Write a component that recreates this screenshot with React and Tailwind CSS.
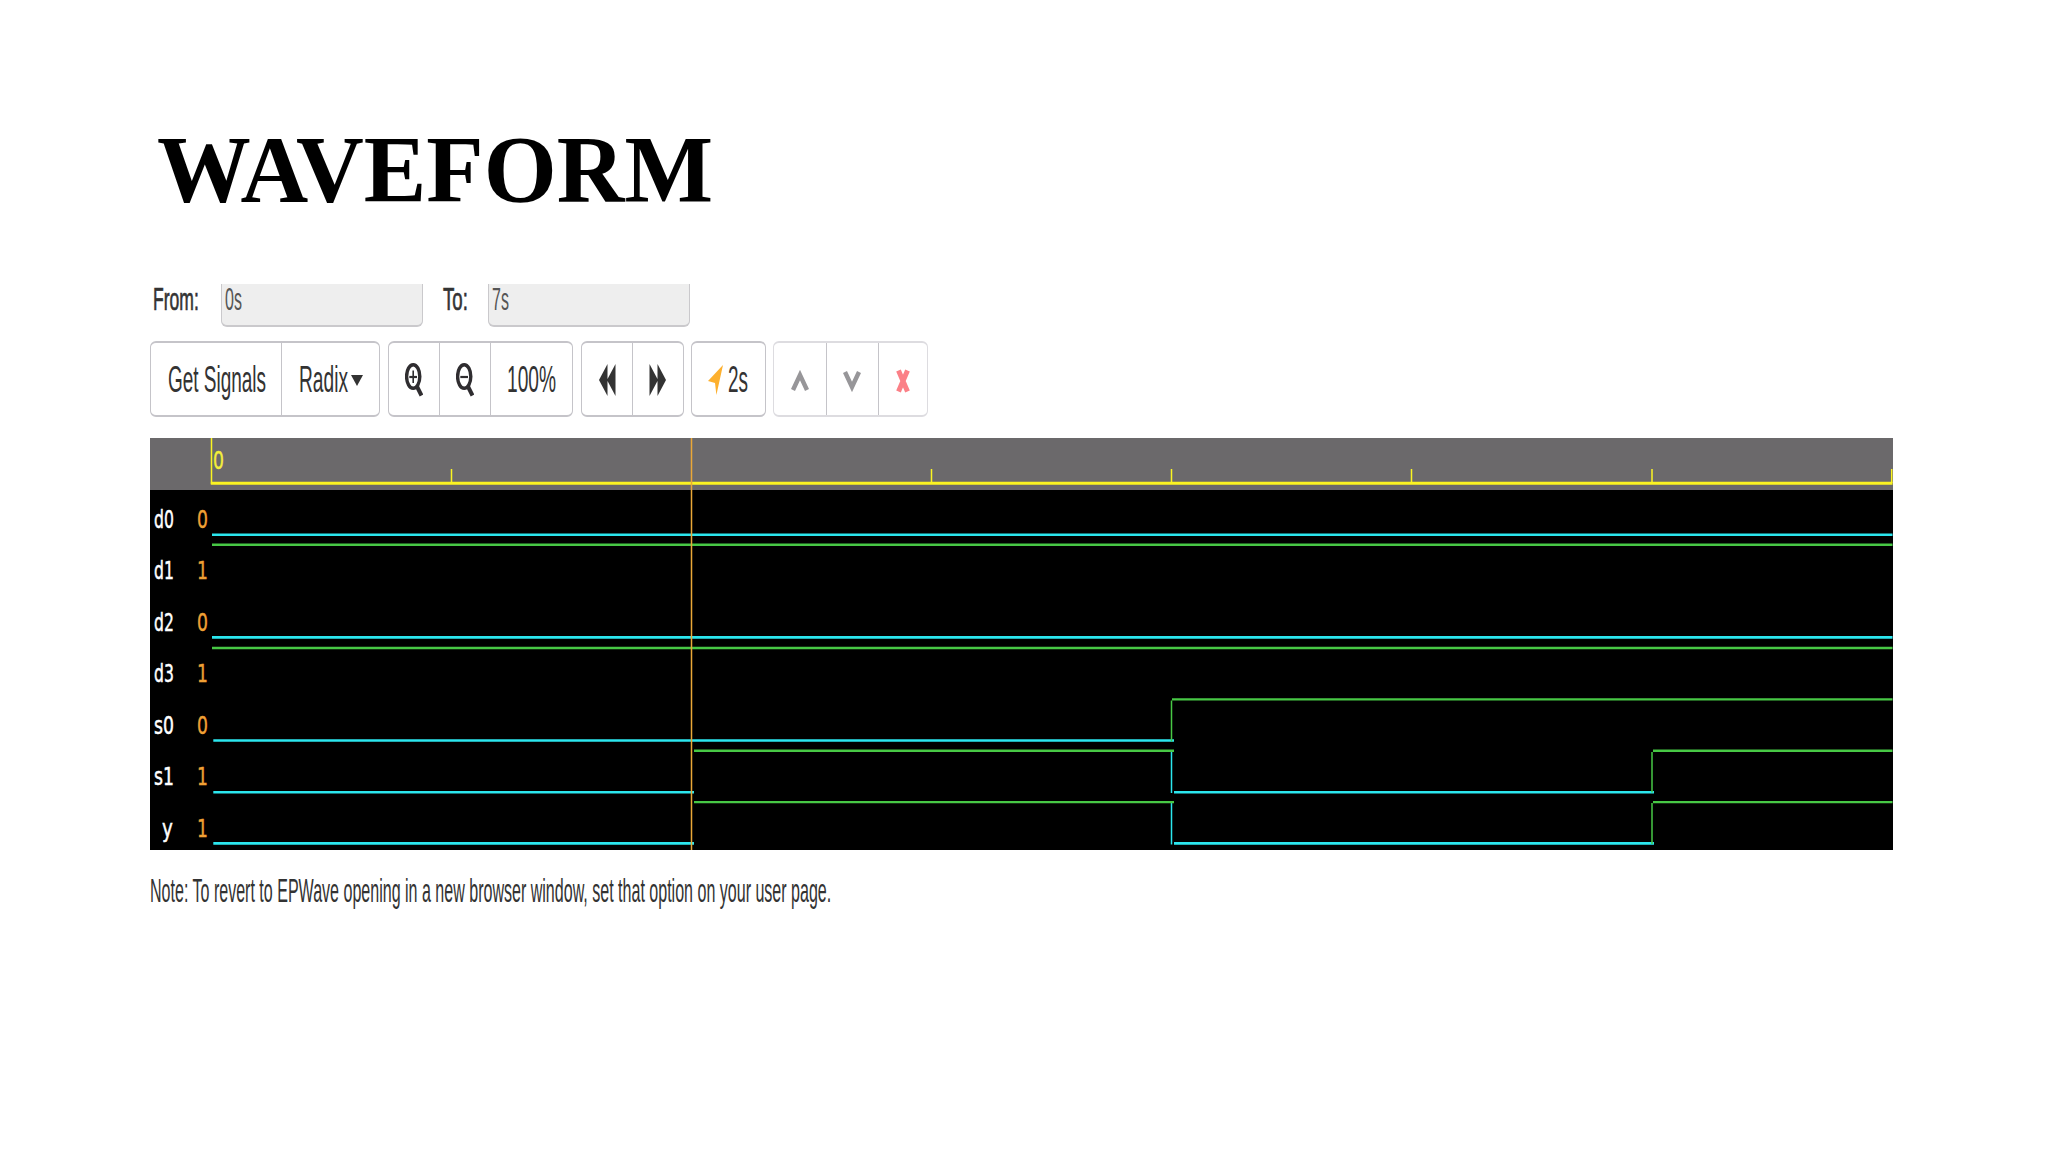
import { useLayoutEffect, useRef, useState } from "react";

// Single line of text squeezed horizontally to fill the width of its box.
function Fit({ className = "", children }) {
  const box = useRef(null);
  const text = useRef(null);
  const [scale, setScale] = useState(1);
  useLayoutEffect(() => {
    setScale(box.current.clientWidth / text.current.offsetWidth);
  }, []);
  return (
    <span ref={box} className={"flex shrink-0 " + className}>
      <span
        ref={text}
        className="shrink-0 origin-left whitespace-nowrap"
        style={{ transform: `scaleX(${scale})` }}
      >
        {children}
      </span>
    </span>
  );
}

function Group({ className = "", children }) {
  return (
    <div
      className={
        "flex h-[76px] shrink-0 rounded-[6px] border-x-[1.5px] border-y-2 divide-x divide-[#c5c4c9] bg-white text-[36px] leading-[40px] text-[#333] " +
        className
      }
    >
      {children}
    </div>
  );
}

function Magnifier({ plus }) {
  return (
    <svg className="mt-[2px] h-[34px] w-[18px]" viewBox="0 0 18 34" fill="none" stroke="#2f2d30">
      <ellipse cx="8.2" cy="13.500" rx="6.6" ry="11.8" strokeWidth="3.4" />
      <path d="M12 23.500 L16.500 32.500" strokeWidth="4" />
      <path d="M4.3 14 H12" strokeWidth="2.2" />
      {plus && <path d="M8.2 7.500 V20" strokeWidth="1.6" />}
    </svg>
  );
}

const SIGNALS = [
  ["d0", "0"],
  ["d1", "1"],
  ["d2", "0"],
  ["d3", "1"],
  ["s0", "0"],
  ["s1", "1"],
  ["y", "1"],
];

const TICKS = [451.5, 931.5, 1171.5, 1411.5, 1652, 1891.7];

function Waves() {
  return (
    <svg className="absolute inset-0 h-full w-full" viewBox="150 438 1742.5 412" preserveAspectRatio="none" fill="none">
      <g stroke="#fbf422">
        <path d="M210.8 483.3 H1892.5" strokeWidth="3" />
        <path d="M211.5 438 V484" strokeWidth="1.5" />
        {TICKS.map((x) => (
          <path key={x} d={`M${x} 469 V483`} strokeWidth="1.5" />
        ))}
      </g>
      <g stroke="#2be6ee" strokeWidth="2.6">
        <path d="M212 534.8 H1892.5 M212 637.4 H1892.5" />
        <path d="M213.3 740.5 H1174 M213.3 792.2 H694 M1174 792.2 H1654 M213.3 843.4 H694 M1174 843.4 H1654" />
        <path d="M1171.5 752 V793 M1171.5 803 V844.5" strokeWidth="1.5" />
      </g>
      <g stroke="#47c845" strokeWidth="2.4">
        <path d="M212 544.8 H1892.5 M212 648 H1892.5" />
        <path d="M1172 699.4 H1892.5 M694 750.7 H1174 M1653 750.7 H1892.5 M694 802.1 H1174 M1653 802.1 H1892.5" />
        <path d="M1171.5 700.5 V741.5 M1652 752 V792.5 M1652 803 V844" strokeWidth="1.5" />
      </g>
      <path d="M691.5 438 V850" stroke="#eaa838" strokeWidth="1.5" />
    </svg>
  );
}

export default function App() {
  return (
    <main className="flex h-[1152px] w-[2048px] flex-col overflow-hidden bg-white pl-[150px] font-['Liberation_Sans',sans-serif]">
      <h1 className="mt-[115px] flex h-[109px] pl-[7px] font-['Liberation_Serif',serif] text-[96px] leading-[110px] font-bold text-black">
        <Fit className="w-[556px]">WAVEFORM</Fit>
      </h1>

      <div className="mt-[60px] flex h-[43px] text-[32px] leading-[30px] text-[#333]">
        <Fit className="ml-[3px] w-[46px] [-webkit-text-stroke:0.7px_#333]">From:</Fit>
        <div className="ml-[22px] flex w-[202px] rounded-b-[6px] border-x-[1.5px] border-b-2 border-[#cac9cc] bg-[#eeeeee] pl-[3px] text-[#555]">
          <Fit className="w-[17px]">0s</Fit>
        </div>
        <Fit className="ml-[20px] w-[25px] [-webkit-text-stroke:0.7px_#333]">To:</Fit>
        <div className="ml-[20px] flex w-[202px] rounded-b-[6px] border-x-[1.5px] border-b-2 border-[#cac9cc] bg-[#eeeeee] pl-[3px] text-[#555]">
          <Fit className="w-[17px]">7s</Fit>
        </div>
      </div>

      <div className="mt-[14px] flex">
        <Group className="w-[230px] border-[#c5c4c9]">
          <div className="flex w-[131px] items-center pt-[2px] pl-[17px]">
            <Fit className="w-[98px]">Get Signals</Fit>
          </div>
          <div className="flex flex-1 items-center pt-[2px] pl-[17px]">
            <Fit className="w-[49px]">Radix</Fit>
            <svg className="ml-[3px] h-[11px] w-[12px]" viewBox="0 0 12 11" fill="#333">
              <path d="M0 0 H12 L6 11 Z" />
            </svg>
          </div>
        </Group>
        <Group className="ml-[7.5px] w-[185.5px] border-[#c5c4c9]">
          <div className="flex w-[51.5px] items-center pl-[16px]">
            <Magnifier plus />
          </div>
          <div className="flex w-[51px] items-center pl-[16px]">
            <Magnifier />
          </div>
          <div className="flex flex-1 items-center pt-[2px] pl-[16px]">
            <Fit className="w-[49px]">100%</Fit>
          </div>
        </Group>
        <Group className="ml-[8px] w-[103px] border-[#c5c4c9]">
          <div className="flex w-[51px] items-center justify-center pt-px">
            <svg className="h-[32px] w-[17px]" viewBox="0 0 17 32" fill="#333">
              <path d="M8.5 0 V32 L0 16 Z M16.5 0 V32 L8 16 Z" />
            </svg>
          </div>
          <div className="flex flex-1 items-center justify-center pt-px pr-[2px]">
            <svg className="h-[32px] w-[17px]" viewBox="0 0 17 32" fill="#333">
              <path d="M0.5 0 L9 16 L0.5 32 Z M8.5 0 L17 16 L8.5 32 Z" />
            </svg>
          </div>
        </Group>
        <Group className="ml-[7px] w-[75px] border-[#c5c4c9]">
          <div className="flex items-center pt-[2px] pl-[15.5px]">
            <svg className="h-[31px] w-[15px]" viewBox="0 0 15 31" fill="#fdb02e">
              <path d="M15 0 L8.4 30 L7 18 L0 16 Z" />
            </svg>
            <Fit className="ml-[5px] w-[20px]">2s</Fit>
          </div>
        </Group>
        <Group className="ml-[7px] w-[155px] border-[#dddce0]">
          <div className="flex w-[53px] items-center justify-center pt-[4px] pr-px">
            <svg className="h-[22px] w-[18px]" viewBox="0 0 18 22" fill="none" stroke="#979699" strokeWidth="4.4">
              <path d="M2 20 L9 5 L16 20" />
            </svg>
          </div>
          <div className="flex w-[52px] items-center justify-center pt-[4px] pr-px">
            <svg className="h-[22px] w-[18px]" viewBox="0 0 18 22" fill="none" stroke="#979699" strokeWidth="4.4">
              <path d="M2 2 L9 17 L16 2" />
            </svg>
          </div>
          <div className="flex flex-1 items-center justify-center pt-[3px] pr-px">
            <svg className="h-[24px] w-[14px]" viewBox="0 0 14 24" fill="none" stroke="#fb8087" strokeWidth="5">
              <path d="M2.500 1.500 L11.500 22.500 M11.500 1.500 L2.500 22.500" />
            </svg>
          </div>
        </Group>
      </div>

      <section className="relative mt-[21px] h-[412px] w-[1742.5px] bg-black font-['DejaVu_Sans',sans-serif] text-[25px] leading-[30px]">
        <div className="flex h-[52px] bg-[#6b696b] pt-[8px] pl-[62.5px] text-[#f3ee3a] [-webkit-text-stroke:0.4px_#f3ee3a]">
          <Fit className="w-[11px]">0</Fit>
        </div>
        <div className="flex h-[360px] w-[60px] flex-col">
          {SIGNALS.map(([name, value]) => (
            <div key={name} className="flex flex-1 items-start justify-end pt-[15px] pr-[2px]">
              <Fit
                className={
                  name.length > 1
                    ? "w-[19.5px] text-white [-webkit-text-stroke:0.5px_white]"
                    : "w-[11px] text-white [-webkit-text-stroke:0.5px_white]"
                }
              >
                {name}
              </Fit>
              <Fit className="ml-[24px] w-[11px] text-[#f0a035] [-webkit-text-stroke:0.4px_#f0a035]">{value}</Fit>
            </div>
          ))}
        </div>
        <Waves />
      </section>

      <p className="mt-[22px] flex text-[33px] leading-[38px] text-[#333]">
        <Fit className="w-[681px]">Note: To revert to EPWave opening in a new browser window, set that option on your user page.</Fit>
      </p>
    </main>
  );
}
